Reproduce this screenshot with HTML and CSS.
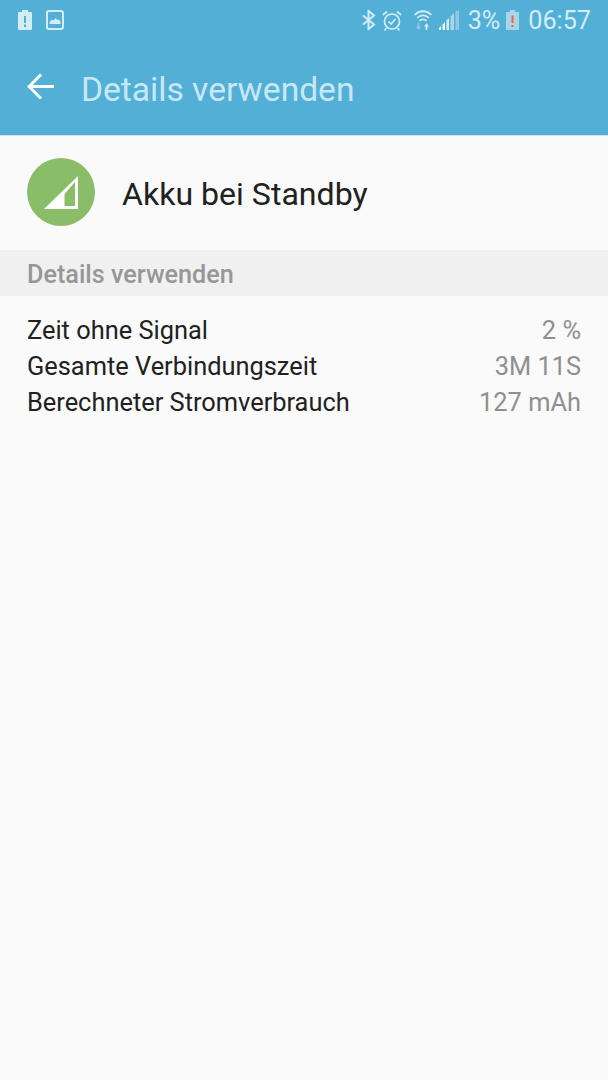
FILE: index.html
```html
<!DOCTYPE html>
<html lang="de">
<head>
    <meta charset="UTF-8">
    <title>Details verwenden</title>
    <link rel="stylesheet" href="styles.css">
</head>
<body>
    <div class="appbar">
        <div class="statusbar">
            <div class="status-left">
                <svg width="14" height="20" viewBox="0 0 14 20">
                    <path fill="#d5ecf5" fill-rule="evenodd" d="M4 0h6v2h3a1 1 0 0 1 1 1v16a1 1 0 0 1-1 1H1a1 1 0 0 1-1-1V3a1 1 0 0 1 1-1h3zM6 6v7h2V6zM6 14.500v2.500h2v-2.500z"/>
                </svg>
                <svg width="18" height="20" viewBox="0 0 18 20">
                    <rect x="1" y="1" width="16" height="18" rx="2" fill="none" stroke="#d5ecf5" stroke-width="2"/>
                    <path fill="#d5ecf5" d="M3.500 14v-2l2.500-2.500 1.500 1 2-2.500 2 2 1.500-.5 1.500 2.500v2z"/>
                </svg>
            </div>
            <div class="status-right">
                <svg class="ic-bt" width="14" height="20" viewBox="0 0 14 20">
                    <path fill="none" stroke="#d5ecf5" stroke-width="2" d="M1 5.500l11 9-5.500 4.500V1L12 5.500l-11 9"/>
                </svg>
                <svg class="ic-alarm" width="20" height="21" viewBox="0 0 20 21">
                    <circle cx="10" cy="11.500" r="7.500" fill="none" stroke="#d5ecf5" stroke-width="1.700"/>
                    <path fill="none" stroke="#d5ecf5" stroke-width="1.700" d="M6.500 11.500l2.500 2.500 4.500-5M1 5l4-3.500M19 5l-4-3.500M4.500 18l-2 2.500M15.500 18l2 2.500"/>
                </svg>
                <svg class="ic-wifi" width="18" height="20" viewBox="0 0 18 20">
                    <path fill="none" stroke="#d5ecf5" stroke-width="1.800" d="M.7 5C5.500 0 12.500 0 17.300 5M3.200 8C6.500 4.500 11.500 4.500 14.800 8M5.500 10.800c2-2 5-2 7 0"/>
                    <path fill="#8fc8e0" d="M4.500 20L2 16.500h1.600V13h1.800v3.500H7z"/>
                    <path fill="#d5ecf5" d="M11 13l2.500 3.500h-1.600V20h-1.800v-3.500H8.500z" transform="translate(1.500 0)"/>
                </svg>
                <svg class="ic-signal" width="20" height="20" viewBox="0 0 20 20">
                    <path fill="#eef8fb" d="M0 20v-2l2-2v4zM3.500 20v-5.500L6 12v8z"/>
                    <path fill="#d5ecf5" d="M7.500 20v-9.500L10 8v12z"/>
                    <path fill="#a9d5e8" d="M11.500 20V6.500L15 3v17z"/>
                    <path fill="#8fc8e0" d="M16.500 20V1.500L20 0v20z"/>
                </svg>
                <span class="status-pct">3%</span>
                <svg class="ic-batt" width="13" height="20" viewBox="0 0 13 20">
                    <path fill="#a9d5e8" d="M4 0h5v2h3a1 1 0 0 1 1 1v16a1 1 0 0 1-1 1H1a1 1 0 0 1-1-1V3a1 1 0 0 1 1-1h3z"/>
                    <path fill="#f0643c" d="M5.500 5.500h2v7.500h-2zM5.500 15h2v2h-2z"/>
                </svg>
                <span class="status-time">06:57</span>
            </div>
        </div>
        <div class="toolbar">
            <svg class="back" width="27" height="27" viewBox="0 0 27 27">
                <path fill="none" stroke="#fff" stroke-width="3" d="M27 13.500H3M14 1.500L2.200 13.500 14 25.500"/>
            </svg>
            <span class="toolbar-title">Details verwenden</span>
        </div>
    </div>

    <div class="app-row">
        <div class="app-icon">
            <svg width="34" height="33" viewBox="0 0 34 33">
                <path fill="#fff" d="M34 0v33H0z"/>
                <path fill="#8abd68" d="M20.500 30V18L31 6v24z"/>
            </svg>
        </div>
        <span class="app-name">Akku bei Standby</span>
    </div>

    <div class="section-head">Details verwenden</div>

    <div class="details">
        <div class="detail-row"><span>Zeit ohne Signal</span><span class="detail-value">2 %</span></div>
        <div class="detail-row"><span>Gesamte Verbindungszeit</span><span class="detail-value">3M 11S</span></div>
        <div class="detail-row"><span>Berechneter Stromverbrauch</span><span class="detail-value">127 mAh</span></div>
    </div>
</body>
</html>
```

FILE: styles.css
```css
html, body {
    margin: 0;
    padding: 0;
}
body {
    width: 608px;
    height: 1080px;
    overflow: hidden;
    background-color: #fafafa;
    font-family: Roboto, "Liberation Sans", sans-serif;
    color: #212121;
}
.appbar {
    background-color: #52afd6;
    height: 135px;
    border-bottom: 1px solid #e0e0e0;
}
.statusbar {
    height: 40px;
    display: flex;
    justify-content: space-between;
    align-items: center;
    padding: 0 17px 0 18px;
    color: #d5ecf5;
}
.status-left, .status-right {
    display: flex;
    align-items: center;
}
.status-left {
    gap: 14px;
}
.ic-alarm { margin-left: 6px; }
.ic-wifi { margin-left: 12px; }
.ic-signal { margin-left: 7px; }
.status-pct {
    font-size: 25.2px;
    margin-left: 9px;
}
.ic-batt { margin-left: 6px; }
.status-time {
    font-size: 25.2px;
    margin-left: 9px;
}
.toolbar {
    display: flex;
    align-items: center;
    height: 95px;
    padding-left: 27px;
}
.toolbar-title {
    font-size: 33.6px;
    color: #c9e7f3;
    margin: 3px 0 0 27px;
}
.back {
    margin-top: -2px;
}
.app-row {
    display: flex;
    align-items: center;
    height: 112px;
    padding: 0 0 2px 27px;
}
.app-icon {
    width: 68px;
    height: 68px;
    border-radius: 50%;
    background-color: #8abd68;
    display: flex;
    align-items: center;
    justify-content: center;
}
.app-name {
    font-size: 32.1px;
    margin: 3px 0 0 27px;
}
.section-head {
    background-color: #f0f0f0;
    height: 46px;
    line-height: 50px;
    padding-left: 27px;
    font-size: 25.2px;
    font-weight: 500;
    color: #979797;
}
.details {
    padding: 16px 27px 0 27px;
}
.detail-row {
    display: flex;
    justify-content: space-between;
    font-size: 25.4px;
    line-height: 36px;
}
.detail-value {
    color: #8f8f8f;
}
```
